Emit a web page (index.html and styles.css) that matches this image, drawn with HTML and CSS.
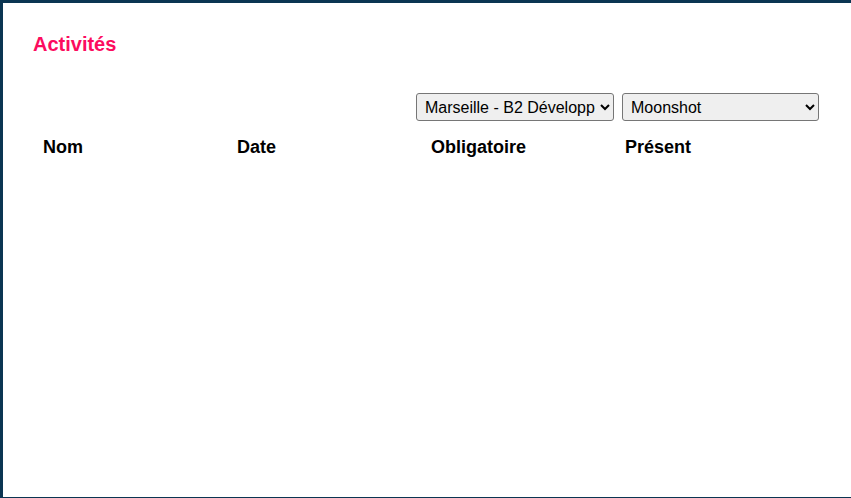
FILE: index.html
```html
<!DOCTYPE html>
<html lang="fr">
<head>
<meta charset="utf-8">
<title>Activités</title>
<link rel="stylesheet" href="styles.css">
</head>
<body>
<main class="panel">
  <h1 class="title">Activités</h1>
  <div class="filters">
    <select class="filter filter-campus">
      <option>Marseille - B2 Développement</option>
    </select>
    <select class="filter filter-project">
      <option>Moonshot</option>
    </select>
  </div>
  <div class="table-head">
    <div class="th">Nom</div>
    <div class="th">Date</div>
    <div class="th">Obligatoire</div>
    <div class="th">Présent</div>
  </div>
</main>
</body>
</html>
```
FILE: styles.css
```css
html, body {
  margin: 0;
  height: 100%;
}
body {
  background: #0b3552;
  font-family: "Liberation Sans", Arial, sans-serif;
  padding: 3px 0 1px 3px;
  box-sizing: border-box;
}
.panel {
  background: #ffffff;
  height: 100%;
  box-sizing: border-box;
  padding: 30px 32px 0 30px;
}
.title {
  margin: 0;
  font-size: 20px;
  font-weight: bold;
  color: #fc0c5e;
  line-height: 23px;
}
.filters {
  display: flex;
  justify-content: flex-end;
  gap: 8px;
  margin-top: 37px;
}
.filter {
  height: 28px;
  font-family: "Liberation Sans", Arial, sans-serif;
  font-size: 16px;
  color: #000;
  background: #efefef;
  border: 1px solid #767676;
  border-radius: 3px;
  padding: 0 2px 0 4px;
}
.filter-campus {
  width: 198px;
}
.filter-project {
  width: 197px;
}
.table-head {
  display: grid;
  grid-template-columns: repeat(4, 194px);
  margin-top: 16px;
}
.th {
  padding-left: 10px;
  font-size: 18px;
  font-weight: bold;
  line-height: 21px;
  color: #000;
}
```
